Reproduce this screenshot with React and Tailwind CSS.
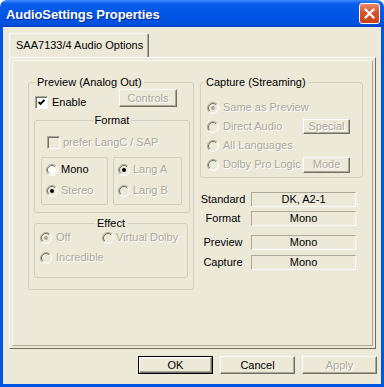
import React from 'react';

// classic 3D button used in the dialog
const Btn = ({ children, disabled, className = '' }) => (
  <div
    className={`flex items-center justify-center border border-t-white border-l-white border-r-[#716F64] border-b-[#716F64] shadow-[inset_-1px_-1px_0_#ACA899] bg-[#ECE9D8] text-[11px] leading-[13px] ${
      disabled ? 'text-[#ACA899] [text-shadow:1px_1px_0_#fff]' : 'text-black'
    } ${className}`}
  >
    {children}
  </div>
);

const Check = ({ checked, disabled }) => (
  <div
    className={`w-[13px] h-[13px] shrink-0 border border-t-[#ACA899] border-l-[#ACA899] border-r-white border-b-white shadow-[inset_1px_1px_0_#716F64] ${
      disabled ? 'bg-[#ECE9D8]' : 'bg-white'
    }`}
  >
    {checked && (
      <svg width="11" height="11" viewBox="0 0 11 11">
        <path d="M2.5 5L4.5 7L8.5 3" fill="none" stroke="#000" strokeWidth="1.8" />
      </svg>
    )}
  </div>
);

const Radio = ({ checked, disabled, dot = '#000' }) => (
  <svg width="12" height="12" viewBox="0 0 12 12" className="shrink-0">
    <circle cx="6" cy="6" r="4.5" fill={disabled ? '#ECE9D8' : '#fff'} />
    <path d="M2.1 9.9A5.5 5.5 0 0 1 9.9 2.1" fill="none" stroke="#ACA899" />
    <path d="M9.9 2.1A5.5 5.5 0 0 1 2.1 9.9" fill="none" stroke="#fff" />
    <path d="M2.8 9.2A4.5 4.5 0 0 1 9.2 2.8" fill="none" stroke="#716F64" />
    <path d="M9.2 2.8A4.5 4.5 0 0 1 2.8 9.2" fill="none" stroke="#F1EFE2" />
    {checked && <circle cx="6" cy="6" r="2" fill={dot} />}
  </svg>
);

const Option = ({ label, checked, disabled, dot, gap = 'ml-[3px]', className = '' }) => (
  <div className={`flex items-center h-[13px] ${className}`}>
    <Radio checked={checked} disabled={disabled} dot={dot} />
    <span className={`${gap} ${disabled ? 'text-[#ACA899] [text-shadow:1px_1px_0_#fff]' : 'text-black'}`}>{label}</span>
  </div>
);

const InfoRow = ({ label, value, className = '' }) => (
  <div className={`flex items-center ${className}`}>
    <span className="w-[46px] text-center">{label}</span>
    <div className="ml-[5px] w-[105px] h-[15px] flex items-center justify-center border border-t-[#ACA899] border-l-[#ACA899] border-r-white border-b-white">
      {value}
    </div>
  </div>
);

export default function App() {
  return (
    <div className="w-[384px] h-[387px] flex flex-col font-['Liberation_Sans',Arial,sans-serif] text-[11px] leading-[13px] text-black bg-white">
      {/* title bar */}
      <div className="h-[27px] shrink-0 flex items-center pl-[6px] pr-[4px] rounded-t-[7px] bg-[linear-gradient(to_bottom,#3D8DF8_0%,#0A5EEB_14%,#0056E6_50%,#0052E0_85%,#0043CC_100%)]">
        <span className="flex-1 pt-[2px] text-white font-bold text-[13px] leading-[16px] tracking-[-0.1px] [text-shadow:1px_1px_0_#0A2A8C]">
          AudioSettings Properties
        </span>
        <div className="w-[21px] h-[21px] rounded-[3px] border border-white flex items-center justify-center bg-[linear-gradient(to_bottom,#E98A6A_0%,#D9542C_45%,#C53E17_100%)]">
          <svg width="11" height="11" viewBox="0 0 11 11">
            <path d="M1.5 1.5L9.5 9.5M9.5 1.5L1.5 9.5" stroke="#fff" strokeWidth="2.2" strokeLinecap="square" />
          </svg>
        </div>
      </div>

      {/* window body */}
      <div className="flex-1 border-x-[3px] border-b-[3px] border-[#0055E5] bg-[#ECE9D8] flex flex-col">
        {/* tab */}
        <div className="pt-[6px] pl-[6px]">
          <div className="w-[140px] h-[24px] flex items-center pl-[6px] border-l border-t border-white border-r border-r-[#716F64] shadow-[inset_-1px_0_0_#ACA899] rounded-t-[2px]">
            SAA7133/4 Audio Options
          </div>
        </div>

        {/* tab page */}
        <div className="ml-[6px] mr-[5px] h-[292px] p-[2px] border border-t-white border-l-white border-r-[#716F64] border-b-[#716F64]">
          <div className="h-full border border-t-[#F7F6F1] border-l-[#F7F6F1] border-r-[#ACA899] border-b-[#ACA899] flex items-start pl-[15px] pt-[15px] gap-[6px]">
            {/* left column */}
            <fieldset className="min-w-0 w-[166px] h-[214px] border border-[#D0D0BF] rounded-[3px]">
              <legend className="ml-[6px] px-[2px]">Preview (Analog Out)</legend>
              <div className="flex items-start h-[20px]">
                <div className="flex items-center ml-[6px] mt-[7px]">
                  <Check checked />
                  <span className="ml-[4px]">Enable</span>
                </div>
                <Btn disabled className="ml-auto mr-[16px] w-[58px] h-[18px]">
                  Controls
                </Btn>
              </div>

              <fieldset className="min-w-0 mt-[5px] ml-[5px] w-[156px] h-[99px] border border-[#D0D0BF] rounded-[3px]">
                <legend className="mx-auto px-[2px]">Format</legend>
                <div className="flex items-center ml-[12px] mt-[9px]">
                  <Check disabled />
                  <span className="ml-[3px] text-[#ACA899] [text-shadow:1px_1px_0_#fff]">prefer LangC / SAP</span>
                </div>
                <div className="flex gap-[5px] ml-[6px] mt-[8px]">
                  <div className="w-[67px] h-[48px] border border-[#D0D0BF] rounded-[2px] pl-[4px] pt-[5px] flex flex-col gap-[8px]">
                    <Option label="Mono" />
                    <Option label="Stereo" checked disabled />
                  </div>
                  <div className="w-[69px] h-[48px] border border-[#D0D0BF] rounded-[2px] pl-[4px] pt-[5px] flex flex-col gap-[8px]">
                    <Option label="Lang A" checked disabled />
                    <Option label="Lang B" disabled />
                  </div>
                </div>
              </fieldset>

              <fieldset className="min-w-0 mt-[4px] ml-[5px] w-[154px] h-[61px] border border-[#D0D0BF] rounded-[3px]">
                <legend className="mx-auto px-[2px]">Effect</legend>
                <div className="flex items-center mt-[1px] pl-[5px]">
                  <Option label="Off" checked disabled dot="#ACA899" gap="ml-[4px]" className="w-[62px]" />
                  <Option label="Virtual Dolby" disabled gap="ml-[2px]" />
                </div>
                <Option label="Incredible" disabled gap="ml-[4px]" className="mt-[7px] pl-[5px]" />
              </fieldset>
            </fieldset>

            {/* right column */}
            <div className="flex flex-col">
              <fieldset className="min-w-0 w-[163px] h-[102px] border border-[#D0D0BF] rounded-[3px]">
                <legend className="ml-[3px] px-[2px]">Capture (Streaming)</legend>
                <div className="mt-[9px] flex flex-col">
                  <div className="h-[19px] flex items-center pl-[6px]">
                    <Option label="Same as Preview" checked disabled dot="#ACA899" gap="ml-[4px]" />
                  </div>
                  <div className="h-[19px] flex items-center pl-[6px]">
                    <Option label="Direct Audio" disabled gap="ml-[4px]" />
                    <Btn disabled className="ml-auto mr-[12px] w-[47px] h-[15px]">
                      Special
                    </Btn>
                  </div>
                  <div className="h-[19px] flex items-center pl-[6px]">
                    <Option label="All Languages" disabled gap="ml-[4px]" />
                  </div>
                  <div className="h-[19px] flex items-center pl-[6px]">
                    <Option label="Dolby Pro Logic" disabled gap="ml-[4px]" />
                    <Btn disabled className="ml-auto mr-[12px] w-[47px] h-[16px]">
                      Mode
                    </Btn>
                  </div>
                </div>
              </fieldset>

              <InfoRow label="Standard" value="DK, A2-1" className="mt-[14px]" />
              <InfoRow label="Format" value="Mono" className="mt-[4px]" />
              <InfoRow label="Preview" value="Mono" className="mt-[9px]" />
              <InfoRow label="Capture" value="Mono" className="mt-[5px]" />
            </div>
          </div>
        </div>

        {/* dialog buttons */}
        <div className="mt-[7px] pr-[4px] flex justify-end gap-[7px]">
          <div className="w-[75px] h-[18px] border border-black">
            <Btn className="w-full h-full">OK</Btn>
          </div>
          <Btn className="w-[75px] h-[18px]">Cancel</Btn>
          <Btn disabled className="w-[75px] h-[18px]">
            Apply
          </Btn>
        </div>
      </div>
    </div>
  );
}
